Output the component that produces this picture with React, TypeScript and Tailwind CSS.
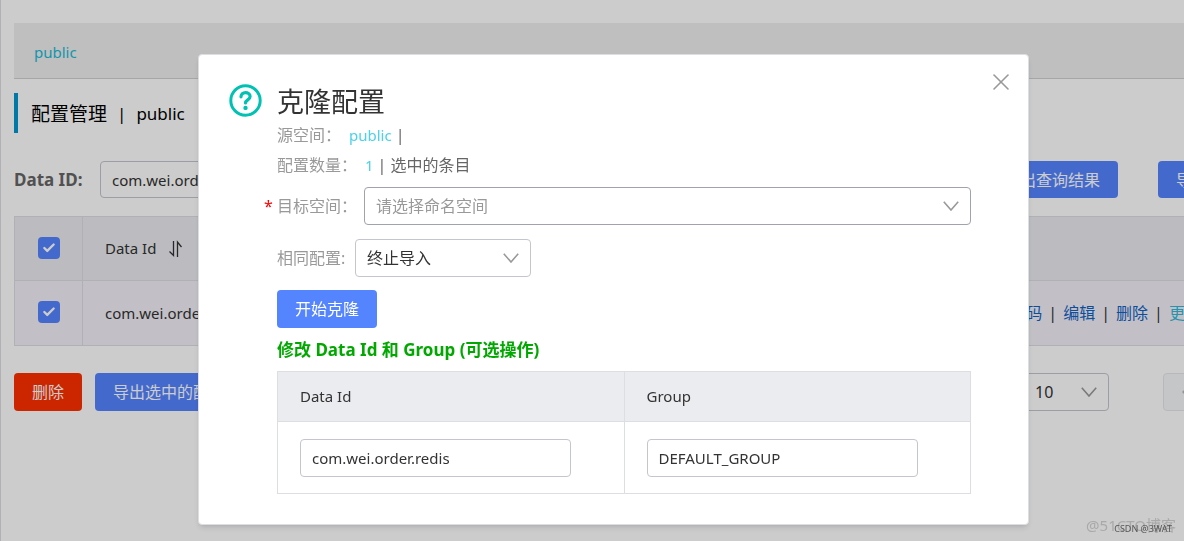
import React from "react";
import { Check, X } from "lucide-react";

const Separator = () => <span className="mx-[6px] text-[#333]">|</span>;

const RowCheckbox = ({ label }: { label: string }) => (
  <span className="relative inline-flex align-middle">
    <input
      type="checkbox"
      defaultChecked
      aria-label={label}
      className="size-[22px] appearance-none rounded bg-[#5584ff]"
    />
    <Check
      className="pointer-events-none absolute top-1 left-1 size-[14px] text-white"
      strokeWidth={4}
    />
  </span>
);

const SelectArrow = () => (
  <svg
    viewBox="0 0 16 10"
    className="pointer-events-none absolute inset-y-0 right-3 my-auto h-[10px] w-4 text-[#999]"
    fill="none"
    stroke="currentColor"
    strokeWidth="1.6"
  >
    <path d="M0.8 0.8 8 9 15.2 0.8" />
  </svg>
);

const SortIcon = () => (
  <svg
    viewBox="0 0 16 18"
    className="h-[18px] w-4 text-[#333]"
    fill="none"
    stroke="currentColor"
    strokeWidth="1.3"
  >
    <path d="M5.500 1v14.500L1.500 11.500M9.500 17V2L13.500 7" />
  </svg>
);

const ConfigPage = () => {
  return (
    <main className="min-h-screen overflow-hidden border-l border-[#dcdde3] bg-white pt-[23px] pl-[13px]">
      <div className="-mr-[74px]">
        <div className="flex h-14 items-center border-b border-[#d0d0d0] bg-[#efefef] px-5 pt-1">
          <a href="#public" className="text-[15px] text-[#19bbd8]">
            public
          </a>
        </div>
        <h1 className="mt-[14px] flex h-10 items-center border-l-4 border-[#0098d2] pt-[2px] pl-[13px] text-[19px] text-black">
          配置管理<span className="mx-[10px] text-[17px]">|</span>
          <span className="text-[17px]">public</span>
        </h1>

        <form className="mt-7 flex items-center">
          <label htmlFor="search" className="w-[86px] text-[17px] font-bold text-[#666]">
            Data ID:
          </label>
          <input
            id="search"
            defaultValue="com.wei.order.redis"
            className="h-[37px] w-[250px] rounded border border-[#c4c6cf] px-[11px] text-[15px] text-[#333]"
          />
          <div className="ml-auto flex gap-10">
            <button type="button" className="h-[37px] rounded bg-[#5584ff] px-[18px] text-white">
              导出查询结果
            </button>
            <button type="button" className="h-[37px] rounded bg-[#5584ff] px-[18px] text-white">
              导入配置
            </button>
          </div>
        </form>

        <table className="mt-[18px] w-full table-fixed border-collapse border border-[#dcdee3] text-left text-[#333]">
          <thead>
            <tr className="h-16 bg-[#ebecf0]">
              <th className="w-[68px] border border-[#dcdee3] pb-1 text-center">
                <RowCheckbox label="全选" />
              </th>
              <th className="border-b border-[#dcdee3] px-[22px] text-[15px] font-normal">
                <span className="flex items-center gap-3">
                  Data Id <SortIcon />
                </span>
              </th>
              <th className="w-[354px] border-b border-[#dcdee3]" aria-label="操作" />
            </tr>
          </thead>
          <tbody>
            <tr className="h-[65px] bg-[#f3f1f8]">
              <td className="border border-[#dcdee3] pb-1 text-center">
                <RowCheckbox label="com.wei.order.redis" />
              </td>
              <td className="px-[22px] text-[15px]">com.wei.order.redis</td>
              <td className="px-[22px] whitespace-nowrap text-[#0f62c4]">
                <a href="#detail">详情</a>
                <Separator />
                <a href="#code">示例代码</a>
                <Separator />
                <a href="#edit">编辑</a>
                <Separator />
                <a href="#delete">删除</a>
                <Separator />
                <a href="#more" className="text-[#33b8d8]">
                  更多
                </a>
              </td>
            </tr>
          </tbody>
        </table>

        <div className="mt-[27px] flex items-center">
          <button className="h-[38px] rounded bg-[#ff3000] px-[18px] text-white">删除</button>
          <button className="ml-[13px] h-[38px] rounded bg-[#5584ff] px-[18px] text-white">
            导出选中的配置
          </button>
          <div className="relative ml-auto">
            <select
              aria-label="每页显示"
              className="h-[38px] w-[87px] appearance-none rounded border border-[#c4c6cf] px-3 text-[#333]"
            >
              <option>10</option>
            </select>
            <SelectArrow />
          </div>
          <button
            aria-label="上一页"
            className="ml-[54px] flex h-[38px] w-[95px] items-center rounded border border-[#e6e7eb] bg-[#f7f8fa] pl-[17px] text-[#bbb]"
          >
            <svg viewBox="0 0 8 12" className="h-3 w-2" fill="none" stroke="currentColor" strokeWidth="1.5">
              <path d="M7 1 2 6l5 5" />
            </svg>
          </button>
        </div>
      </div>
    </main>
  );
};

const CloneDialog = () => {
  return (
    <div className="fixed inset-0 flex items-start justify-center bg-black/20 pt-[54px] pl-[43px]">
      <section
        role="dialog"
        aria-labelledby="clone-title"
        className="relative flex w-full max-w-[831px] gap-[15px] rounded border border-[#dcdee3] bg-white pt-[29px] pr-[57px] pb-[30px] pl-[30px] shadow-md"
      >
        <button aria-label="关闭" className="absolute top-[13px] right-[13px] text-[#999]">
          <X className="size-7" strokeWidth={1.4} />
        </button>
        <svg viewBox="0 0 33 33" className="size-[33px] shrink-0 text-[#00c1b2]" fill="none" stroke="currentColor">
          <circle cx="16.500" cy="16.500" r="14.700" strokeWidth="3" />
          <path
            d="M12 12.800c0-2.600 2-4.200 4.500-4.200s4.600 1.600 4.600 4c0 3.200-4.600 3.400-4.600 6.400"
            strokeWidth="3.200"
            strokeLinecap="round"
          />
          <circle cx="16.500" cy="23.900" r="2.200" fill="currentColor" stroke="none" />
        </svg>

        <form className="min-w-0 flex-1">
          <h2 id="clone-title" className="text-[27px] leading-9 text-[#333]">
            克隆配置
          </h2>
          <p className="leading-[30px] text-[#999]">
            源空间：<span className="ml-2 text-[15px] text-[#49d2e9]">public</span>
            <span className="ml-1 text-[#666]">|</span>
          </p>
          <p className="leading-[30px] text-[#999]">
            配置数量：<span className="ml-2 text-[15px] text-[#49d2e9]">1</span>
            <span className="ml-1 text-[#666]">| 选中的条目</span>
          </p>

          <div className="mt-[7px] -ml-[13px] flex items-center">
            <span className="w-[13px] text-[#f00]">*</span>
            <label htmlFor="target" className="w-[87px] text-[#999]">
              目标空间：
            </label>
            <div className="relative flex-1">
              <select
                id="target"
                className="block h-[38px] w-full appearance-none rounded border border-[#a0a2ad] px-[11px] text-[#999]"
              >
                <option>请选择命名空间</option>
              </select>
              <SelectArrow />
            </div>
          </div>

          <div className="mt-[14px] flex items-center">
            <label htmlFor="policy" className="w-[78px] text-[#999]">
              相同配置:
            </label>
            <div className="relative">
              <select
                id="policy"
                className="block h-[38px] w-[176px] appearance-none rounded border border-[#c4c6cf] px-[11px] text-[#333]"
              >
                <option>终止导入</option>
              </select>
              <SelectArrow />
            </div>
          </div>

          <button type="button" className="mt-[13px] block h-[38px] rounded bg-[#5584ff] px-[18px] text-white">
            开始克隆
          </button>

          <h3 className="mt-[10px] text-[17px] leading-6 font-bold text-[#00a800]">
            修改 Data Id 和 Group (可选操作)
          </h3>

          <table className="mt-[9px] w-full table-fixed border-collapse text-left text-[15px] text-[#333]">
            <thead>
              <tr className="h-[50px] bg-[#ebecf0]">
                <th className="border border-[#dcdee3] px-[22px] font-normal">Data Id</th>
                <th className="border border-[#dcdee3] px-[22px] font-normal">Group</th>
              </tr>
            </thead>
            <tbody>
              <tr className="h-[72px]">
                <td className="border border-[#dcdee3] px-[22px]">
                  <input
                    aria-label="Data Id"
                    defaultValue="com.wei.order.redis"
                    className="block h-[38px] w-full max-w-[271px] rounded border border-[#c4c6cf] px-[11px]"
                  />
                </td>
                <td className="border border-[#dcdee3] px-[22px]">
                  <input
                    aria-label="Group"
                    defaultValue="DEFAULT_GROUP"
                    className="block h-[38px] w-full max-w-[271px] rounded border border-[#c4c6cf] px-[11px]"
                  />
                </td>
              </tr>
            </tbody>
          </table>
        </form>
      </section>
    </div>
  );
};

const Watermark = () => (
  <div className="pointer-events-none fixed right-2 bottom-1">
    <span className="block text-[15px] leading-6 text-[#a9a9a9]">@51CTO博客</span>
    <span className="absolute right-1 bottom-0 text-[9px] leading-4 whitespace-nowrap text-[#555]">
      CSDN @3WAT
    </span>
  </div>
);

const App = () => {
  return (
    <div className="font-['Noto_Sans','Noto_Sans_CJK_SC',sans-serif] text-base">
      <ConfigPage />
      <CloneDialog />
      <Watermark />
    </div>
  );
};

export default App;
